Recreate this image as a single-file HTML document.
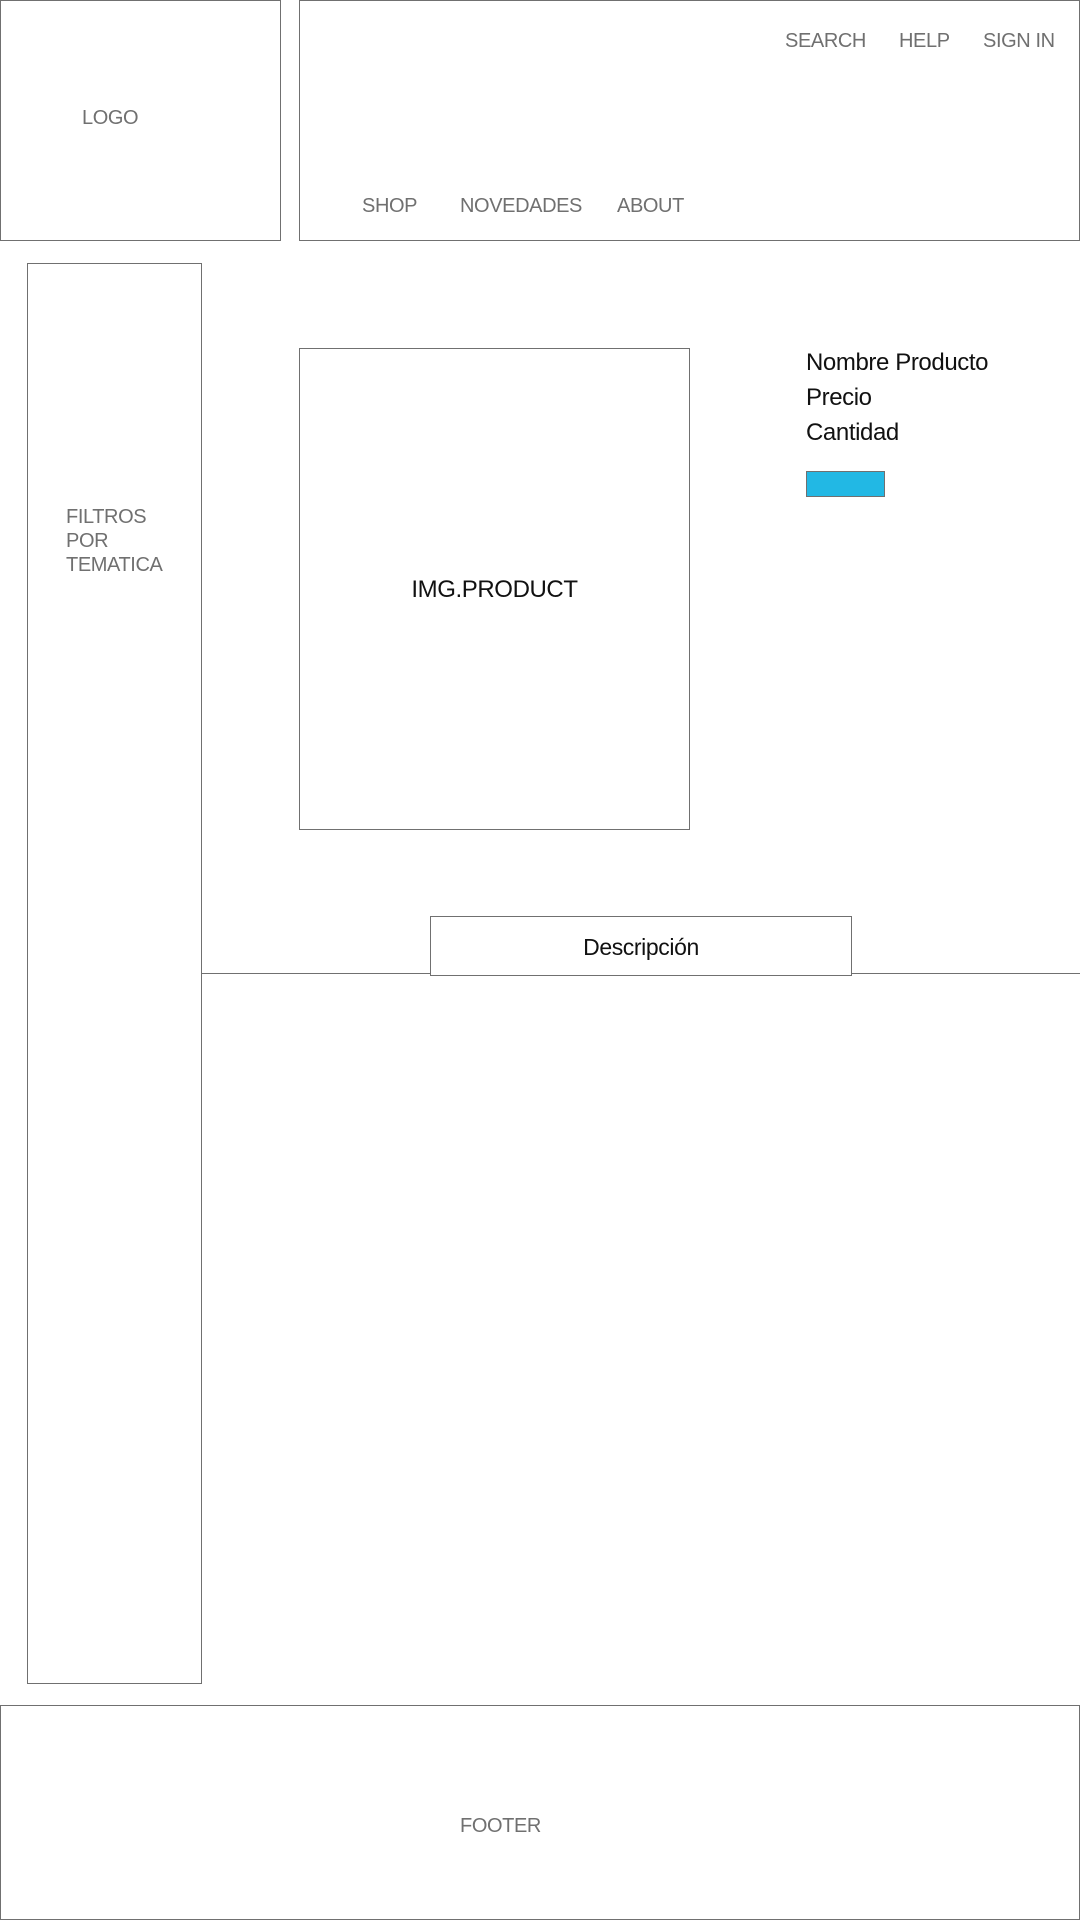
<!DOCTYPE html>
<html><head><meta charset="utf-8"><style>
body{margin:0;width:1080px;height:1920px;background:#fff;position:relative;font-family:"Liberation Sans",Arial,sans-serif;overflow:hidden}
.b{position:absolute;border:1px solid #707070;box-sizing:border-box}
.t{position:absolute;color:#707070;font-size:20px;letter-spacing:-0.4px;line-height:1;white-space:nowrap}
.k{position:absolute;color:#111;font-size:24px;letter-spacing:-0.4px;line-height:1;white-space:nowrap}
</style></head><body>
<div class="b" style="left:0;top:0;width:281px;height:241px"></div>
<div class="b" style="left:299px;top:0;width:781px;height:241px"></div>
<div class="t" style="left:82px;top:108px">LOGO</div>
<div class="t" style="left:785px;top:31px">SEARCH</div>
<div class="t" style="left:899px;top:31px">HELP</div>
<div class="t" style="left:983px;top:31px">SIGN IN</div>
<div class="t" style="left:362px;top:196px">SHOP</div>
<div class="t" style="left:460px;top:196px">NOVEDADES</div>
<div class="t" style="left:617px;top:196px">ABOUT</div>
<div class="b" style="left:27px;top:263px;width:175px;height:1421px"></div>
<div class="t" style="left:66px;top:505px;line-height:24px">FILTROS<br>POR<br>TEMATICA</div>
<div class="b" style="left:299px;top:348px;width:391px;height:482px"></div>
<div class="k" style="left:299px;width:391px;text-align:center;top:578px;font-size:24px">IMG.PRODUCT</div>
<div class="k" style="left:806px;top:351px">Nombre Producto</div>
<div class="k" style="left:806px;top:386px">Precio</div>
<div class="k" style="left:806px;top:421px">Cantidad</div>
<div class="b" style="left:806px;top:471px;width:79px;height:26px;background:#22b8e4"></div>
<div style="position:absolute;left:201px;top:973px;width:879px;height:1px;background:#707070"></div>
<div class="b" style="left:430px;top:916px;width:422px;height:60px;background:#fff"></div>
<div class="k" style="left:430px;width:422px;text-align:center;top:936px;font-size:23px">Descripción</div>
<div class="b" style="left:0;top:1705px;width:1080px;height:215px"></div>
<div class="t" style="left:460px;top:1816px">FOOTER</div>
</body></html>
